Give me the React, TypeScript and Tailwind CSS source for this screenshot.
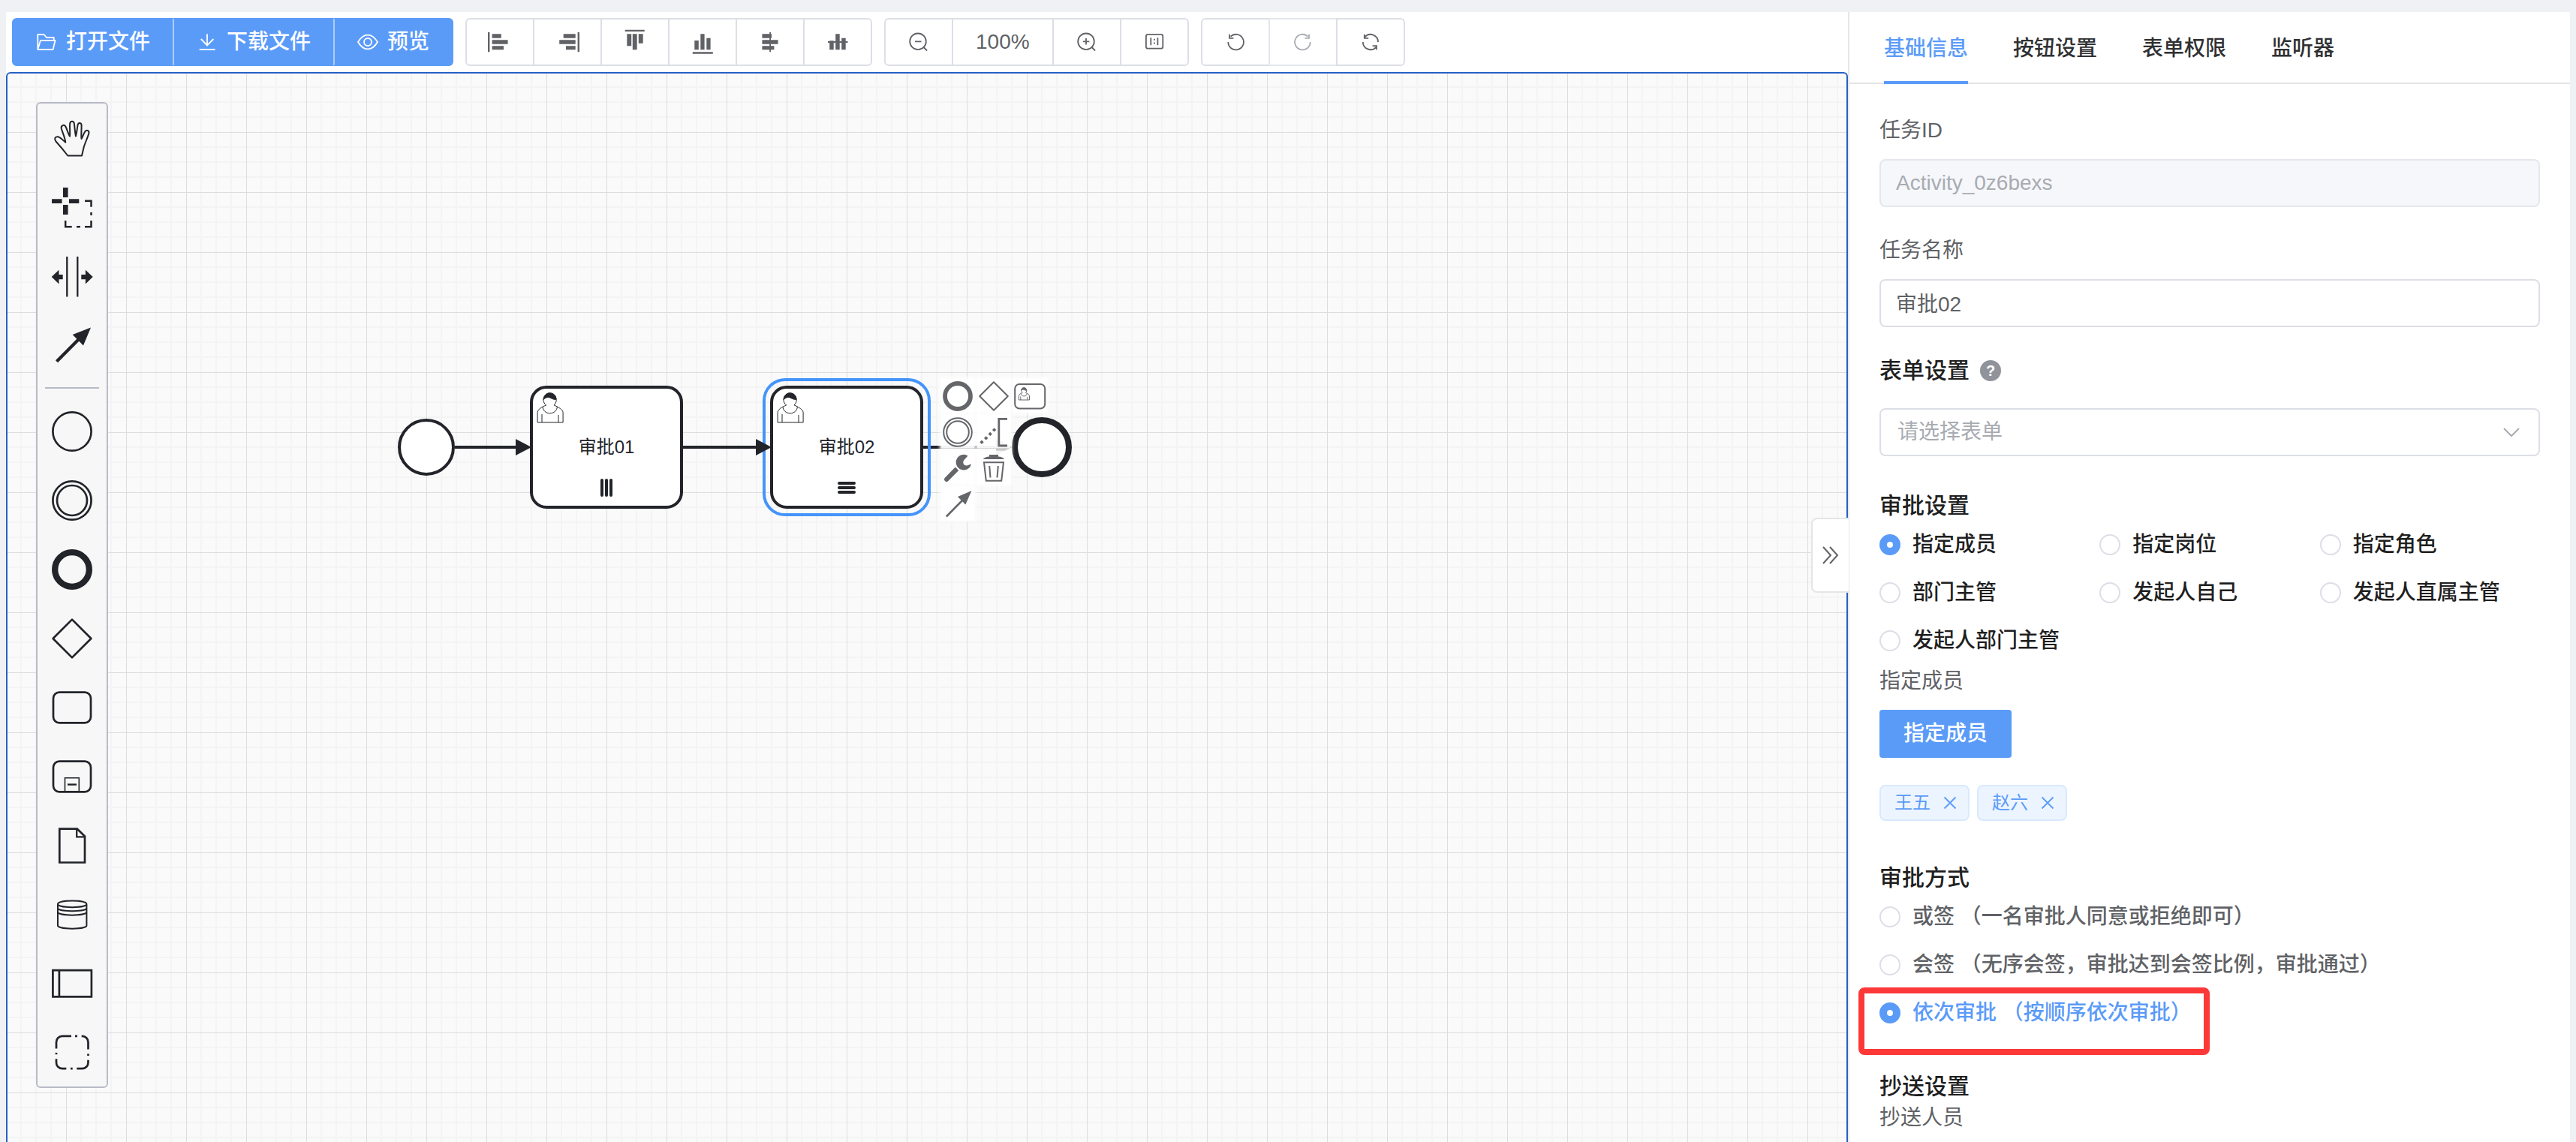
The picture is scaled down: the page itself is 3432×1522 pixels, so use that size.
import React, { useState } from 'react';

type IconProps = { children: React.ReactNode };

const ToolIcon = ({ children }: IconProps) => (
  <svg aria-hidden="true" viewBox="0 0 28 28" className="size-7 shrink-0 overflow-visible" fill="none" stroke="currentColor" strokeWidth="1.8">
    {children}
  </svg>
);

const AlignIcon = ({ children }: IconProps) => (
  <svg aria-hidden="true" viewBox="0 0 28 28" className="size-7 shrink-0 overflow-visible" fill="currentColor">
    {children}
  </svg>
);

const fileTools = [
  {
    label: '打开文件',
    icon: (
      <ToolIcon>
        <path d="M2.3 24V4h8.2l3.5 4h9.8v4M2.3 24L6 11.8h19.6L22.6 24z" strokeLinejoin="round" />
      </ToolIcon>
    ),
  },
  {
    label: '下载文件',
    icon: (
      <ToolIcon>
        <path d="M14 3.3v15M5.8 10l8.2 8.4L22.4 10M3.7 24h20.8" />
      </ToolIcon>
    ),
  },
  {
    label: '预览',
    icon: (
      <ToolIcon>
        <path d="M1 14C5 7.200 9 4.600 14 4.600S23 7.200 27 14C23 20.800 19 23.400 14 23.400S5 20.800 1 14z" />
        <circle cx="14" cy="14" r="5" />
      </ToolIcon>
    ),
  },
];

const alignTools = [
  {
    label: '左对齐',
    icon: (
      <AlignIcon>
        <path d="M-2 1h2.400v26.300h-2.400zM3.600 3.300h12.200v5.400H3.600zM3.600 11.300h21v5.400h-21zM3.600 19.300H19v5H3.600z" />
      </AlignIcon>
    ),
  },
  {
    label: '右对齐',
    icon: (
      <AlignIcon>
        <path d="M27.600 1H30v26.300h-2.400zM8.700 3.300h16v5.400h-16zM3.200 11.300h21.500v5.400H3.200zM12 19.300h12.700v5H12z" />
      </AlignIcon>
    ),
  },
  {
    label: '顶部对齐',
    icon: (
      <AlignIcon>
        <path d="M.700-2.300h26V0h-26zM3.300 3.300h5.900v16H3.300zM10.800 3.300h5.900v21h-5.900zM18.800 3.300h5.900v12.400h-5.900z" />
      </AlignIcon>
    ),
  },
  {
    label: '底部对齐',
    icon: (
      <AlignIcon>
        <path d="M.800 27.300h27v2.400h-27zM3.300 12h5.500v12.300H3.300zM11.300 3.300h5.300v21h-5.300zM19.300 8.700h5.300v15.600h-5.300z" />
      </AlignIcon>
    ),
  },
  {
    label: '水平居中',
    icon: (
      <AlignIcon>
        <path d="M13.200 1H15v26.300h-1.800zM3.400 3.300H16v5.400H3.400zM3.400 11.300h21.200v5.400H3.400zM3.400 19.300h16v5h-16z" />
      </AlignIcon>
    ),
  },
  {
    label: '垂直居中',
    icon: (
      <AlignIcon>
        <path d="M1 13h26.500v2H1zM3.200 12.300h5.500v12H3.200zM11.200 3.300h5.500v21h-5.500zM19.200 8.700h5.500v15.600h-5.500z" />
      </AlignIcon>
    ),
  },
];

const zoomTools = [
  {
    label: '缩小',
    icon: (
      <ToolIcon>
        <circle cx="13" cy="13.300" r="10.800" />
        <path d="M20.600 21l4.500 4.500M9 13.300h8.500" />
      </ToolIcon>
    ),
  },
  { label: '100%', icon: null },
  {
    label: '放大',
    icon: (
      <ToolIcon>
        <circle cx="13" cy="13.300" r="10.800" />
        <path d="M20.600 21l4.500 4.500M8.800 13.300h8.500M13 9v8.500" />
      </ToolIcon>
    ),
  },
  {
    label: '原始比例',
    icon: (
      <ToolIcon>
        <rect x="2.900" y="3.900" width="22.400" height="18.800" rx="2.500" />
        <path d="M9.300 8.300v10M18.400 8.300v10M14 9.800v2M14 14.600v2" />
      </ToolIcon>
    ),
  },
];

const historyTools = [
  {
    label: '撤销',
    disabled: false,
    icon: (
      <ToolIcon>
        <path d="M4.300 14A10.300 10.300 0 1 0 7.500 6.600M6 3.700v5.200h5.400" />
      </ToolIcon>
    ),
  },
  {
    label: '重做',
    disabled: true,
    icon: (
      <ToolIcon>
        <path d="M23.700 14A10.300 10.300 0 1 1 20.500 6.600M22 3.700v5.200h-5.400" />
      </ToolIcon>
    ),
  },
  {
    label: '重置',
    disabled: false,
    icon: (
      <ToolIcon>
        <path d="M24 14A10.100 10.100 0 0 0 6.400 7.200M5.800 3.700v5.200h5.400M3.800 14A10.100 10.100 0 0 0 21.400 20.800M22 24.300v-5.200h-5.400" />
      </ToolIcon>
    ),
  },
];

const PaletteIcon = ({ children }: IconProps) => (
  <svg aria-hidden="true" viewBox="0 0 60 60" className="size-15" fill="none" stroke="#22242a" strokeWidth="2.700">
    {children}
  </svg>
);

const paletteTools = [
  {
    label: '抓手工具',
    icon: (
      <PaletteIcon>
        <path
          strokeWidth="2"
          strokeLinejoin="round"
          d="M24.300 53.500C19 46.500 13.500 40 8.500 34.500C5.800 31.500 7.200 28 10.800 28.200C14.500 28.400 17.500 33 21.300 35.600C20.500 29.500 17.500 23 15.800 17.500C14.800 13.200 19.600 11 21.600 15C23.500 19 24.800 24.500 27 27.600C27.600 21.500 26.600 15.500 27.200 10.500C27.800 6.800 32.200 6.800 32.800 10.500C33.600 15.500 33.600 21.500 35 27.600C36.600 22 36.700 17 37.600 12.400C38.600 8.800 42.500 9.500 42.600 13C42.700 19 42 25 42.500 31C44.500 27.500 45.500 24 47.500 21C50 18.300 53.300 20.500 52.300 24C50.500 30 47.500 36 45.700 42L43 53.500z"
        />
      </PaletteIcon>
    ),
  },
  {
    label: '框选工具',
    icon: (
      <PaletteIcon>
        <path fill="#22242a" stroke="none" d="M18 4h6.600v13H18zM18 27h6.600v13H18zM3 19.200h13.500v5.800H3zM26 19.200h13.300v5.800H26z" />
        <path strokeWidth="2.500" d="M47 21.800h8.500v8M55.500 37v4M55.500 48v8.200H47M41 56.200h-5M29.700 56.200h-8.500V48" />
      </PaletteIcon>
    ),
  },
  {
    label: '空间工具',
    icon: (
      <PaletteIcon>
        <path strokeWidth="2.300" d="M23.300 4v53.400M37.300 4v53.400" />
        <path fill="#22242a" stroke="none" d="M2.700 31l9.800-9.300V28h5.200v6.200h-5.200v6.300zM57.700 31l-9.800-9.300V28h-5.600v6.200h5.600v6.300z" />
      </PaletteIcon>
    ),
  },
  {
    label: '连线工具',
    icon: (
      <PaletteIcon>
        <path strokeWidth="4.300" d="M9.500 51.800L40 21" />
        <path fill="#22242a" stroke="none" d="M55 6.500L30.700 15.900L45 30.400z" />
      </PaletteIcon>
    ),
  },
  {
    label: '开始事件',
    icon: (
      <PaletteIcon>
        <circle cx="30" cy="31" r="25.600" />
      </PaletteIcon>
    ),
  },
  {
    label: '中间事件',
    icon: (
      <PaletteIcon>
        <circle cx="30" cy="31" r="25.600" />
        <circle cx="30" cy="31" r="20" />
      </PaletteIcon>
    ),
  },
  {
    label: '结束事件',
    icon: (
      <PaletteIcon>
        <circle cx="30" cy="31" r="22.800" strokeWidth="8.300" />
      </PaletteIcon>
    ),
  },
  {
    label: '网关',
    icon: (
      <PaletteIcon>
        <path strokeLinejoin="round" d="M30 5.600L55.400 31L30 56.400L4.600 31z" />
      </PaletteIcon>
    ),
  },
  {
    label: '任务',
    icon: (
      <PaletteIcon>
        <rect x="5" y="10.700" width="50" height="40.600" rx="8" />
      </PaletteIcon>
    ),
  },
  {
    label: '子流程',
    icon: (
      <PaletteIcon>
        <rect x="5" y="10.700" width="50" height="40.600" rx="8" />
        <path strokeWidth="1.600" d="M20.500 51V32.700h18.800V51" />
        <path strokeWidth="2.400" d="M24 41.600h12" />
      </PaletteIcon>
    ),
  },
  {
    label: '数据对象',
    icon: (
      <PaletteIcon>
        <path d="M13.300 8.700h23.500l10.200 9.800v35H13.300z" />
        <path strokeWidth="2.300" d="M36.200 8.700v10.700H47" />
      </PaletteIcon>
    ),
  },
  {
    label: '数据存储',
    icon: (
      <PaletteIcon>
        <path
          strokeWidth="2"
          d="M11 17C11 11 49.400 11 49.400 17V45.500C49.400 51 11 51 11 45.500zM11 17C11 22.500 49.400 22.500 49.400 17M11 22.300C11 27.500 49.400 27.500 49.400 22.300M11 27.500C11 33 49.400 33 49.400 27.500"
        />
      </PaletteIcon>
    ),
  },
  {
    label: '泳池',
    icon: (
      <PaletteIcon>
        <path d="M4.400 13.200h51.500v35.200H4.400zM12.900 13v35.500" />
      </PaletteIcon>
    ),
  },
  {
    label: '分组',
    icon: (
      <PaletteIcon>
        <path d="M29 8.800H17A8 8 0 0 0 9 17V25.500M34 8.800h3M42.700 8.800H43.500A8 8 0 0 1 51.500 17V26.400M51.500 32.400v2.600M51.500 40.700V44A8 8 0 0 1 43.500 52.200H36.300M30.700 52.200H28M22.300 52.200H17A8 8 0 0 1 9 44V39.300M9 31v2.300" />
      </PaletteIcon>
    ),
  },
];

const UserGlyph = ({ ink = '#22242a' }: { ink?: string }) => (
  <>
    <path
      fill="#fff"
      d="M15 12c0.909,-0.845 1.594,-2.049 1.594,-3.385 0,-2.554 -1.805,-4.622 -4.357,-4.622 -2.552,0 -4.288,2.068 -4.288,4.622 0,1.348 0.974,2.562 1.896,3.405 -0.529,0.187 -5.669,2.097 -5.794,4.756v6.718h17v-6.718c0,-2.298 -5.528,-4.595 -6.051,-4.776zm-8,6l0,5.500m11,0l0,-5"
    />
    <path fill="none" d="M15 12m2.162,1.009c0,2.447 -2.158,4.431 -4.821,4.431 -2.665,0 -4.822,-1.981 -4.822,-4.431" />
    <path
      fill={ink}
      d="M15 12m-6.900,-3.800c0,0 2.251,-2.358 4.274,-1.177 2.024,1.181 4.221,1.537 4.124,0.965 -0.098,-0.570 -0.117,-3.791 -4.191,-4.136 -3.572,0.001 -4.208,3.673 -4.207,4.348z"
    />
  </>
);

const tasks = [
  { name: '审批01', x: 708, selected: false, marker: 'M94 124v20M100 124v20M106 124v20' },
  { name: '审批02', x: 1028, selected: true, marker: 'M90 128h20M90 134h20M90 140h20' },
];

const Diagram = () => (
  <svg className="absolute inset-0 size-full" role="img" aria-label="流程图">
    <defs>
      <pattern id="grid" x="8" y="16" width="80" height="80" patternUnits="userSpaceOnUse">
        <path d="M20 0v80M40 0v80M60 0v80M0 20h80M0 40h80M0 60h80" stroke="#f4f4f4" strokeWidth="2" />
        <path d="M0 0h80v1H1v79H0z" fill="#dddddd" />
      </pattern>
    </defs>
    <g transform="translate(-10 -98)" stroke="#22242a">
      <rect width="100%" height="100%" x="10" y="98" fill="url(#grid)" stroke="none" />
      <path d="M606 596h90M908 596h108M1228 596h110" strokeWidth="4" />
      <circle cx="568" cy="596" r="36" fill="#fff" strokeWidth="4" />
      {tasks.map((task) => (
        <g key={task.name} transform={`translate(${task.x} 516)`}>
          <rect width="200" height="160" rx="20" fill="#fff" strokeWidth="4" />
          <g transform="scale(2)" strokeWidth="0.500">
            <UserGlyph />
          </g>
          <text x="100" y="88" textAnchor="middle" className="text-2xl" fill="#22242a" stroke="none">
            {task.name}
          </text>
          <path d={task.marker} strokeWidth="4" strokeLinecap="round" />
          {task.selected && <rect x="-10" y="-10" width="220" height="180" rx="28" fill="none" stroke="#4494fb" strokeWidth="4" />}
        </g>
      ))}
      <path d="M687 585l21 11l-21 11zM1007 585l21 11l-21 11zM1327 585l21 11l-21 11z" fill="#22242a" stroke="none" />
      <circle cx="1388" cy="596" r="36" fill="#fff" strokeWidth="8" />
    </g>
  </svg>
);

const PadIcon = ({ children }: IconProps) => (
  <svg aria-hidden="true" viewBox="0 0 44 44" className="size-11" fill="none" stroke="#64666a" strokeWidth="2">
    {children}
  </svg>
);

const padTools = [
  {
    label: '追加结束事件',
    place: 'col-start-1',
    icon: (
      <PadIcon>
        <circle cx="22" cy="23" r="17" strokeWidth="5.800" />
      </PadIcon>
    ),
  },
  {
    label: '追加网关',
    place: 'col-start-2',
    icon: (
      <PadIcon>
        <path strokeLinejoin="round" d="M22 4.200L40.800 23L22 41.800L3.200 23z" />
      </PadIcon>
    ),
  },
  {
    label: '追加任务',
    place: 'col-start-3',
    icon: (
      <PadIcon>
        <rect x="2.200" y="7" width="40" height="32.500" rx="6" />
        <g transform="translate(4 8.500) scale(0.830)" strokeWidth="1.200">
          <UserGlyph ink="#64666a" />
        </g>
      </PadIcon>
    ),
  },
  {
    label: '追加中间事件',
    place: 'col-start-1',
    icon: (
      <PadIcon>
        <circle cx="22" cy="23" r="18.800" />
        <circle cx="22" cy="23" r="14.800" />
      </PadIcon>
    ),
  },
  {
    label: '添加注释',
    place: 'col-start-2',
    icon: (
      <PadIcon>
        <path strokeWidth="2.800" d="M40 5.400H28.800V41H40" />
        <path fill="#64666a" stroke="none" d="M6 33.500l2.700 2.700l-2.700 2.700l-2.700-2.700zM11.700 28.200l2.700 2.700l-2.700 2.700l-2.700-2.700zM17.200 22.700l2.700 2.700l-2.700 2.700l-2.700-2.700zM22.600 17.200l2.700 2.700l-2.700 2.700l-2.700-2.700z" />
      </PadIcon>
    ),
  },
  {
    label: '更改类型',
    place: 'col-start-1',
    icon: (
      <PadIcon>
        <path
          fill="#64666a"
          stroke="none"
          d="M35.500 6.400A10.300 10.300 0 1 0 40 17.500L35 19.300C30 20.600 27.500 15.500 30.500 12zM18.800 21.500L23.200 25.900L8.800 40.500C6.200 42.600 2.600 39 4.600 36z"
        />
      </PadIcon>
    ),
  },
  {
    label: '删除',
    place: 'col-start-2',
    icon: (
      <PadIcon>
        <path fill="#64666a" stroke="none" d="M7.700 11C9.500 8.800 12.500 7.700 16 7.500V5h12v2.500C31.500 7.700 34.500 8.800 36 11z" />
        <path d="M9 15.200h26L32.200 39.800H11.800zM16.200 20l1.300 15.500M27.800 20l-1.300 15.500" />
      </PadIcon>
    ),
  },
  {
    label: '连接',
    place: 'col-start-1',
    icon: (
      <PadIcon>
        <path strokeWidth="2.600" d="M6.800 39.500L30 16" />
        <path fill="#64666a" stroke="none" d="M40.500 5L22 13L32.300 23.500z" />
      </PadIcon>
    ),
  },
];

const toolButton =
  'flex h-16 items-center justify-center gap-3 border-2 px-[30px] text-[28px] leading-7 -ml-0.5 first:ml-0 first:rounded-l-md last:rounded-r-md';

const approverTypes = ['指定成员', '指定岗位', '指定角色', '部门主管', '发起人自己', '发起人直属主管', '发起人部门主管'];
const approvalModes = ['或签 （一名审批人同意或拒绝即可）', '会签 （无序会签，审批达到会签比例，审批通过）', '依次审批 （按顺序依次审批）'];
const tabs = ['基础信息', '按钮设置', '表单权限', '监听器'];

const radioClass =
  'size-7 shrink-0 appearance-none rounded-full border-2 border-[#dcdfe6] bg-white checked:border-[10px] checked:border-[#5b9bf8]';
const labelClass = 'mb-4 block h-11 text-[28px] leading-11 text-[#606266]';
const headingClass = 'h-10 text-[30px] leading-10 font-medium text-[#1f1f1f]';

export default function App() {
  const [tab, setTab] = useState(tabs[0]);
  const [type, setType] = useState(approverTypes[0]);
  const [mode, setMode] = useState(approvalModes[2]);
  const [taskName, setTaskName] = useState('审批02');
  const [members, setMembers] = useState(['王五', '赵六']);

  return (
    <div className="flex min-h-screen bg-[#eff1f5] px-2 pt-4 font-['Liberation_Sans','Noto_Sans_CJK_SC',sans-serif]">
      <main className="flex min-w-0 flex-1 flex-col bg-white">
        <div className="flex gap-4 p-2 text-[#606266]">
          <div className="flex">
            {fileTools.map((tool) => (
              <button
                key={tool.label}
                className={`${toolButton} border-[#5b9bf8] bg-[#5b9bf8] font-medium text-white not-first:border-l-[#adcdfb]`}
              >
                {tool.icon}
                {tool.label}
              </button>
            ))}
          </div>
          <div className="flex">
            {alignTools.map((tool) => (
              <button key={tool.label} aria-label={tool.label} className={`${toolButton} border-[#dcdfe6]`}>
                {tool.icon}
              </button>
            ))}
          </div>
          <div className="flex">
            {zoomTools.map((tool) => (
              <button key={tool.label} aria-label={tool.label} className={`${toolButton} border-[#dcdfe6]`}>
                {tool.icon ?? tool.label}
              </button>
            ))}
          </div>
          <div className="flex">
            {historyTools.map((tool) => (
              <button
                key={tool.label}
                aria-label={tool.label}
                disabled={tool.disabled}
                className={`${toolButton} border-[#dcdfe6] disabled:border-[#e4e7ed] disabled:text-[#a8abb2]`}
              >
                {tool.icon}
              </button>
            ))}
          </div>
        </div>

        <div className="relative flex-1 rounded-t-md border-2 border-b-0 border-[#2560c6] bg-[#fafafa] px-[38px] py-[38px]">
          <Diagram />
          <div className="relative flex w-24 flex-col rounded-md border-2 border-[#b8bbc6] bg-[#f7f7f7]">
            {paletteTools.map((tool, i) => (
              <React.Fragment key={tool.label}>
                {i === 4 && <hr className="mx-2.5 my-2.5 border-t-2 border-[#b8bbc6]" />}
                <button aria-label={tool.label} className="flex h-[92px] items-center justify-center">
                  {tool.icon}
                </button>
              </React.Fragment>
            ))}
          </div>
          <div className="absolute top-[407px] left-[1244px] grid grid-cols-3 gap-1">
            {padTools.map((tool) => (
              <button key={tool.label} aria-label={tool.label} className={`${tool.place} size-11 bg-white/95 shadow-[0_0_4px_2px_#fefefe]`}>
                {tool.icon}
              </button>
            ))}
          </div>
        </div>
      </main>

      <aside className="relative w-[962px] shrink-0 border-l-2 border-[#e6e6e8] bg-white">
        <button
          aria-label="收起面板"
          className="absolute top-[674px] -left-[51px] flex h-[100px] w-[50px] items-center justify-center rounded-l-lg border-2 border-r-0 border-[#e4e5e8] bg-white text-[#606266]"
        >
          <svg aria-hidden="true" viewBox="0 0 24 24" className="size-6" fill="none" stroke="currentColor" strokeWidth="2">
            <path d="M2 1l10 11L2 23M11 1l10 11l-10 11" />
          </svg>
        </button>

        <div role="tablist" className="flex h-24 gap-15 border-b-2 border-[#e4e4e6] pl-[46px]">
          {tabs.map((name) => (
            <button
              key={name}
              role="tab"
              aria-selected={tab === name}
              onClick={() => setTab(name)}
              className="-mb-0.5 border-b-4 border-transparent pt-1.5 text-[28px] leading-11 font-medium text-[#303133] aria-selected:border-b-[#5b9bf8] aria-selected:text-[#5b9bf8]"
            >
              {name}
            </button>
          ))}
        </div>

        <form className="p-10 pb-0">
          <label htmlFor="task-id" className={labelClass}>
            任务ID
          </label>
          <input
            id="task-id"
            disabled
            value="Activity_0z6bexs"
            className="mb-9 block h-16 w-full rounded-lg border-2 border-[#e4e7ed] bg-[#f5f7fa] px-5 text-[28px] text-[#a8abb2]"
          />

          <label htmlFor="task-name" className={labelClass}>
            任务名称
          </label>
          <input
            id="task-name"
            value={taskName}
            onChange={(e) => setTaskName(e.target.value)}
            className="mb-9 block h-16 w-full rounded-lg border-2 border-[#dcdfe6] bg-white px-5 pb-0.5 text-[28px] text-[#606266]"
          />

          <div className="mb-7 flex h-11 items-center gap-3.5">
            <label htmlFor="form-select" className={headingClass}>
              表单设置
            </label>
            <span className="flex size-7 items-center justify-center rounded-full bg-[#909399] text-xl leading-7 font-bold text-white">?</span>
          </div>
          <div className="relative">
            <select
              id="form-select"
              defaultValue=""
              className="block h-16 w-full appearance-none rounded-lg border-2 border-[#dcdfe6] bg-white px-[22px] text-[28px] text-[#a8abb2]"
            >
              <option value="">请选择表单</option>
            </select>
            <svg aria-hidden="true" viewBox="0 0 28 28" className="pointer-events-none absolute top-[18px] right-6 size-7" fill="none" stroke="#a8abb2" strokeWidth="2">
              <path d="M4 9l10 10l10-10" />
            </svg>
          </div>

          <h2 id="approver-heading" className={`${headingClass} mt-[46px]`}>
            审批设置
          </h2>
          <div role="radiogroup" aria-labelledby="approver-heading" className="grid grid-cols-3">
            {approverTypes.map((name) => (
              <label key={name} className="flex h-16 items-center gap-4 text-[28px] font-medium whitespace-nowrap text-[#1f1f1f]">
                <input type="radio" name="approver" checked={type === name} onChange={() => setType(name)} className={radioClass} />
                {name}
              </label>
            ))}
          </div>

          <label htmlFor="pick-member" className={labelClass}>
            指定成员
          </label>
          <button id="pick-member" type="button" className="block h-16 rounded bg-[#5b9bf8] px-8 text-[28px] leading-7 font-medium text-white">
            指定成员
          </button>

          <div className="mt-9 flex gap-2.5">
            {members.map((name) => (
              <span key={name} className="flex h-12 items-center rounded-lg border-2 border-[#d9e9fd] bg-[#ecf5ff] pr-2.5 pl-[18px] text-2xl leading-6 text-[#5b9bf8]">
                {name}
                <button
                  type="button"
                  aria-label={`移除${name}`}
                  onClick={() => setMembers(members.filter((m) => m !== name))}
                  className="ml-3"
                >
                  <svg aria-hidden="true" viewBox="0 0 28 28" className="size-7" fill="none" stroke="currentColor" strokeWidth="1.800">
                    <path d="M6.500 6.500l15 15M21.500 6.500l-15 15" />
                  </svg>
                </button>
              </span>
            ))}
          </div>

          <h2 id="mode-heading" className={`${headingClass} mt-14`}>
            审批方式
          </h2>
          <div role="radiogroup" aria-labelledby="mode-heading" className="relative">
            {approvalModes.map((name) => (
              <label
                key={name}
                className="flex h-16 items-center gap-4 text-[28px] font-medium whitespace-nowrap text-[#606266] has-checked:text-[#5b9bf8]"
              >
                <input type="radio" name="mode" checked={mode === name} onChange={() => setMode(name)} className={radioClass} />
                {name}
              </label>
            ))}
            <div className="pointer-events-none absolute top-[126px] -left-7 h-[90px] w-[468px] rounded-lg border-8 border-[#fc3838]" />
          </div>

          <h2 className={`${headingClass} mt-[46px]`}>抄送设置</h2>
          <p className="text-[28px] leading-11 text-[#606266]">抄送人员</p>
        </form>
      </aside>
    </div>
  );
}
